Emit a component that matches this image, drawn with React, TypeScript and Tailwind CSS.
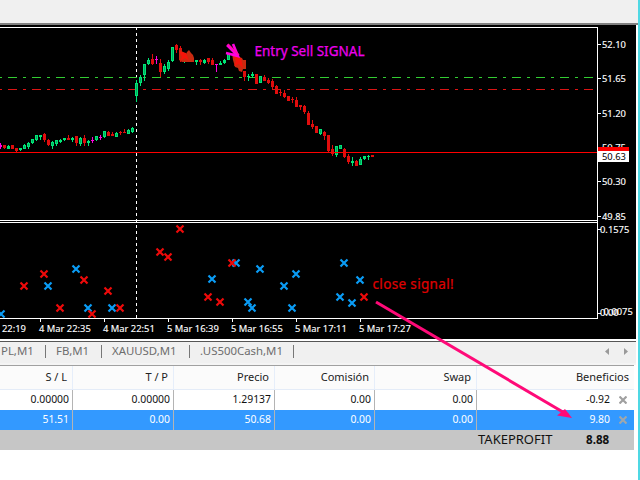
const G = "#00e676";
const R = "#e00d0d";
const M = "#ff00e0";
// [x, bodyTop, bodyBottom, wickTop, wickBottom, colour] in 3x zoom y units
type C = [number, number, number, number, number, string];
const c: C[] = [
  [0.5,436,441,430,446,M],[4.5,436,445,436,447,R],[8.5,437,446,435,448,G],[12.5,435,447,435,447,R],[16.5,444,452,444,456,R],[20.5,445,449,445,453,G],
  [24.5,435,447,432,447,G],[28.5,428,440,425,446,G],[32.5,418,428,416,431,G],[36.5,405,420,405,423,G],[40.5,405,410,405,420,G],[44.5,402,421,399,425,R],
  [48.5,419,435,417,437,R],[52.5,426,438,423,446,G],[56.5,421,433,419,437,G],[60.5,420,425,417,430,G],[64.5,415,420,414,423,G],[68.5,414,419,406,420,R],
  [72.5,414,420,411,425,G],[76.5,408,429,408,437,R],[80.5,414,432,410,438,G],[84.5,414,430,406,437,R],[88.5,424,428,419,438,G],[92.5,420,422,412,430,M],
  [96.5,408,420,408,424,G],[100.5,412,414,406,420,M],[104.5,394,410,392,413,G],[108.5,395,408,393,408,R],[112.5,403,407,396,408,R],[116.5,399,410,397,411,G],
  [120.5,396,399,393,406,R],[124.5,395,399,388,400,R],[128.5,390,402,388,402,G],[132.5,384,396,380,400,G],[136.5,250,288,240,305,G],[140.5,232,250,225,258,G],
  [144.5,193,225,193,243,G],[148.5,180,192,175,195,G],[152.5,178,192,162,195,R],[156.5,178,181,168,192,M],[160.5,190,216,178,232,R],[164.5,197,217,192,222,G],
  [168.5,185,207,180,212,G],[172.5,141,184,140,186,G],[176.5,135,150,131,158,R],[180.5,143,180,138,186,R],[184.5,165,180,160,189,G],
  [196.5,181,186,181,194,G],[200.5,180,185,178,194,R],[204.5,179,189,177,193,G],[208.5,175,187,175,192,R],[212.5,180,195,175,195,R],[216.5,192,195,192,216,M],
  [220.5,189,195,183,195,G],[224.5,180,190,176,192,G],[228.5,160,180,158,180,G],[244.5,213,231,213,243,R],[248.5,228,232,222,243,G],[252.5,222,228,216,234,G],
  [256.5,222,252,222,252,R],[260.5,228,249,228,249,G],[264.5,230,243,225,243,R],[268.5,240,250,234,252,R],[272.5,243,262,238,268,R],[276.5,258,282,254,282,R],
  [280.5,277,280,270,288,R],[284.5,279,292,270,295,R],[288.5,289,303,289,303,R],[292.5,298,301,291,309,R],[296.5,300,321,291,321,R],[300.5,316,321,316,330,R],
  [304.5,318,336,315,342,R],[308.5,339,375,333,375,R],[312.5,373,380,360,387,R],[316.5,378,399,378,399,R],[320.5,388,402,386,404,G],[324.5,396,408,394,420,R],
  [328.5,405,453,405,456,R],[332.5,447,462,435,468,R],[336.5,438,465,438,471,G],[340.5,436,447,436,447,G],[344.5,447,471,444,474,R],[348.5,468,486,462,492,R],
  [352.5,483,488,471,498,G],[356.5,483,498,481,498,R],[360.5,477,495,471,495,G],[364.5,468,477,468,480,G],[368.5,468,472,465,480,G],[372.5,465,471,465,471,R],
];
const blue = [[1,314],[76,269],[48,286],[88,308],[112,308],[212,279],[236,263],[260,269],[284,286],[296,274],[248,302],[252,308],[292,308],[344,263],[360,280],[340,297],[352,303]];
const red = [[44,274],[24,286],[84,280],[108,291],[60,308],[92,314],[120,308],[160,252],[168,257],[180,229],[232,263],[208,297],[220,302],[364,297]];
const times: [number, string, number][] = [[8,"22:19",2],[40,"4 Mar 22:35",39],[104,"4 Mar 22:51",103],[168,"5 Mar 16:39",167],[232,"5 Mar 16:55",231],[296,"5 Mar 17:11",295],[360,"5 Mar 17:27",359]];
const prices: [number, string][] = [[44,"52.10"],[78,"51.65"],[113,"51.20"],[147,"50.75"],[181,"50.30"],[216,"49.85"]];

function Mark({ x, y, color }: { x: number; y: number; color: string }) {
  return <path d={`M${x - 3.5} ${y - 3.5}L${x + 3.5} ${y + 3.5}M${x + 3.5} ${y - 3.5}L${x - 3.5} ${y + 3.5}`} stroke={color} strokeWidth={2.2} />;
}

function Chart() {
  return (
    <svg width={636} height={314} viewBox="0 25 636 314" className="block" style={{ fontFamily: '"Noto Sans", sans-serif' }}>
      <g shapeRendering="crispEdges">
        <path d="M0 27.5H597.5V318.5H0M0 220.5H597M0 222.5H597" stroke="#fff" fill="none" />
        {prices.map(([y]) => <path key={y} d={`M597 ${y + .5}H601`} stroke="#fff" />)}
        <path d="M597 229.5H601M597 313.5H601" stroke="#fff" />
        {times.slice(1).map(([x]) => <path key={x} d={`M${x + .5} 318V322`} stroke="#fff" />)}
        <path d="M136.5 27V318" stroke="#fff" strokeDasharray="3 3" />
        <path d="M0 77.5H593" stroke="#32cd32" strokeDasharray="9 6 3 6" strokeDashoffset={16} />
        <path d="M0 89.5H593" stroke="#dc1414" strokeDasharray="9 6 3 6" strokeDashoffset={16} />
        {c.map(([x, t, b, wt, wb, col]) => {
          const top = Math.round(t / 3), bot = Math.round(b / 3), wTop = Math.round(wt / 3), wBot = Math.round(wb / 3);
          const hollow = col === G && bot - top > 3;
          const xi = Math.floor(x);
          return (
            <g key={x}>
              <rect x={xi} y={wTop} width={1} height={Math.max(wBot - wTop, 1)} fill={col} />
              {hollow ? (
                <rect x={xi - 0.5} y={top + 0.5} width={2} height={bot - top - 1} fill="#00a860" stroke={col} />
              ) : (
                <rect x={xi - 1} y={top} width={3} height={Math.max(bot - top, 1)} fill={col} />
              )}
            </g>
          );
        })}
        <rect x={0} y={152} width={597} height={1} fill="#ff0000" />
      </g>
      <g fill="#c92a10">
        <polygon points="179,49 183,52 186,54 187,52 189,50 191,53 193,55 194,58 194,62 182,62 179,60" />
        <polygon points="232,53 236,55 239,57 242,58 243,60 246,60 246,69 243,69 242,72 239,71 238,68 235,67 233,60" />
      </g>
      <g fill="#f5140a">
        <polygon points="179,51 186,53 189,61 185,58 180,61 182,57" />
        <polygon points="232,54 241,58 243,68 239,64 234,66 236,61" />
      </g>
      <path d="M227 45L236 54M233 44L238 56L226 53" stroke={M} strokeWidth={2.6} fill="none" />
      <path d="M228 44L239 55" stroke="#ff10a0" strokeWidth={1.4} />
      <text x={254.5} y={55.5} fill="#ee00ee" stroke="#ee00ee" strokeWidth={0.25} fontSize={13.5}>Entry Sell SIGNAL</text>
      <text x={372.5} y={289} fill="#e00000" stroke="#e00000" strokeWidth={0.2} fontSize={13.5} letterSpacing={0.35}>close signal!</text>
      {blue.map(([x, y], i) => <Mark key={i} x={x} y={y} color="#0a9cf5" />)}
      {red.map(([x, y], i) => <Mark key={i} x={x} y={y} color="#ee0a0a" />)}
      <g fontSize={9.4} fill="#fff" stroke="#fff" strokeWidth={0.12}>
        {prices.map(([y, t]) => <text key={y} x={602} y={y + 3.5}>{t}</text>)}
        <text x={600} y={233}>0.1575</text>
        <text x={600} y={316}>0.00</text>
        <text x={603.5} y={315}>0.0075</text>
        {times.map(([, t, x]) => <text key={t} x={x} y={331.5}>{t}</text>)}
      </g>
      <rect x={598} y={147} width={31} height={4} fill="#ff0000" shapeRendering="crispEdges" />
      <rect x={598} y={151} width={31} height={11} fill="#fff" shapeRendering="crispEdges" />
      <text x={602} y={160} fontSize={9.4} fill="#000">50.63</text>
    </svg>
  );
}

const header = ["S / L", "T / P", "Precio", "Comisión", "Swap", "Beneficios"];
const cols = "grid grid-cols-[73px_101px_101px_100px_102px_157px]";
const rows = [
  ["0.00000", "0.00000", "1.29137", "0.00", "0.00", "-0.92"],
  ["51.51", "0.00", "50.68", "0.00", "0.00", "9.80"],
];

function CloseX({ color }: { color: string }) {
  return (
    <svg width={8} height={8} viewBox="0 0 8 8" className="absolute right-[7px] top-[6px]">
      <path d="M.5.5L7.5 7.5M7.5.5L.5 7.5" stroke={color} strokeWidth={2.2} />
    </svg>
  );
}

export default function App() {
  return (
    <div className="relative flex h-[480px] w-[640px] overflow-hidden bg-white text-[10.4px] font-['Noto_Sans',sans-serif]">
      <div className="flex h-full w-[638px] flex-col">
        <div className="h-[23px] w-full bg-[#f0f0f0]" />
        <div className="h-[2px] w-full bg-[#808080]" />
        <div className="flex h-[314px] w-[636px] bg-black"><Chart /></div>
        <div className="h-[2px] w-[636px] bg-white" />
        <div className="h-px w-[636px] bg-[#555]" />
        <div className="flex h-[23px] w-[636px] items-center border-b-[2px] border-[#f4f4f4] bg-[#f0f0f0] pb-[3px] text-[11.4px] text-[#6d6d6d]">
          <span className="w-[45px] pl-px">PL,M1</span>
          <span className="h-[13px] w-px bg-[#777]" />
          <span className="w-[55px] pl-[10px]">FB,M1</span>
          <span className="h-[13px] w-px bg-[#777]" />
          <span className="w-[87px] pl-[10px]">XAUUSD,M1</span>
          <span className="h-[13px] w-px bg-[#777]" />
          <span className="w-[103px] pl-[10px]">.US500Cash,M1</span>
          <span className="h-[13px] w-px bg-[#777]" />
          <span className="ml-auto mr-[8px] flex gap-[15px] text-[#9a9a9a]">
            <svg width={4} height={7} viewBox="0 0 4 7"><path d="M4 0V7L0 3.5Z" fill="currentColor" /></svg>
            <svg width={4} height={7} viewBox="0 0 4 7"><path d="M0 0V7L4 3.5Z" fill="currentColor" /></svg>
          </span>
        </div>
        <div className="w-[634px]">
          <div className={`${cols} h-[25px] border-y border-t-[#a0a0a0] border-b-[#e4ecf8] bg-[#fbfbfb] text-[11px] text-[#222]`}>
            {header.map((h, i) => (
              <div key={h} className={`flex items-center justify-end border-r border-[#e6eefa] pr-[5px] ${i === 5 ? "border-r-0" : ""}`}>{h}</div>
            ))}
          </div>
          {rows.map((r, ri) => (
            <div key={ri} className={`${cols} h-[20px] ${ri === 1 ? "bg-[#3399ff] text-white" : "bg-white text-[#111]"}`}>
              {r.map((v, i) => (
                <div key={i} className={`relative flex items-center justify-end border-[#b4b4b4] ${i === 5 ? "pr-[24px]" : "border-r pr-[3px]"}`}>
                  {v}
                  {i === 5 && <CloseX color={ri === 1 ? "#9fa7ad" : "#a0a0a0"} />}
                </div>
              ))}
            </div>
          ))}
          <div className="flex h-[20px] items-center bg-[#c6c6c6] text-[#111]">
            <span className="ml-[478px] w-[108px] text-[13px]">TAKEPROFIT</span>
            <span className="text-[11.6px] font-bold">8.88</span>
          </div>
        </div>
      </div>
      <div className="h-full w-[2px] bg-[#4fd8e4]" />
      <svg width={640} height={480} className="pointer-events-none absolute left-0 top-0">
        <path d="M376 302L568 415" stroke="#ff0a78" strokeWidth={3} />
        <polygon points="572,418 557,415.5 565,409" fill="#ff0a78" />
      </svg>
    </div>
  );
}
